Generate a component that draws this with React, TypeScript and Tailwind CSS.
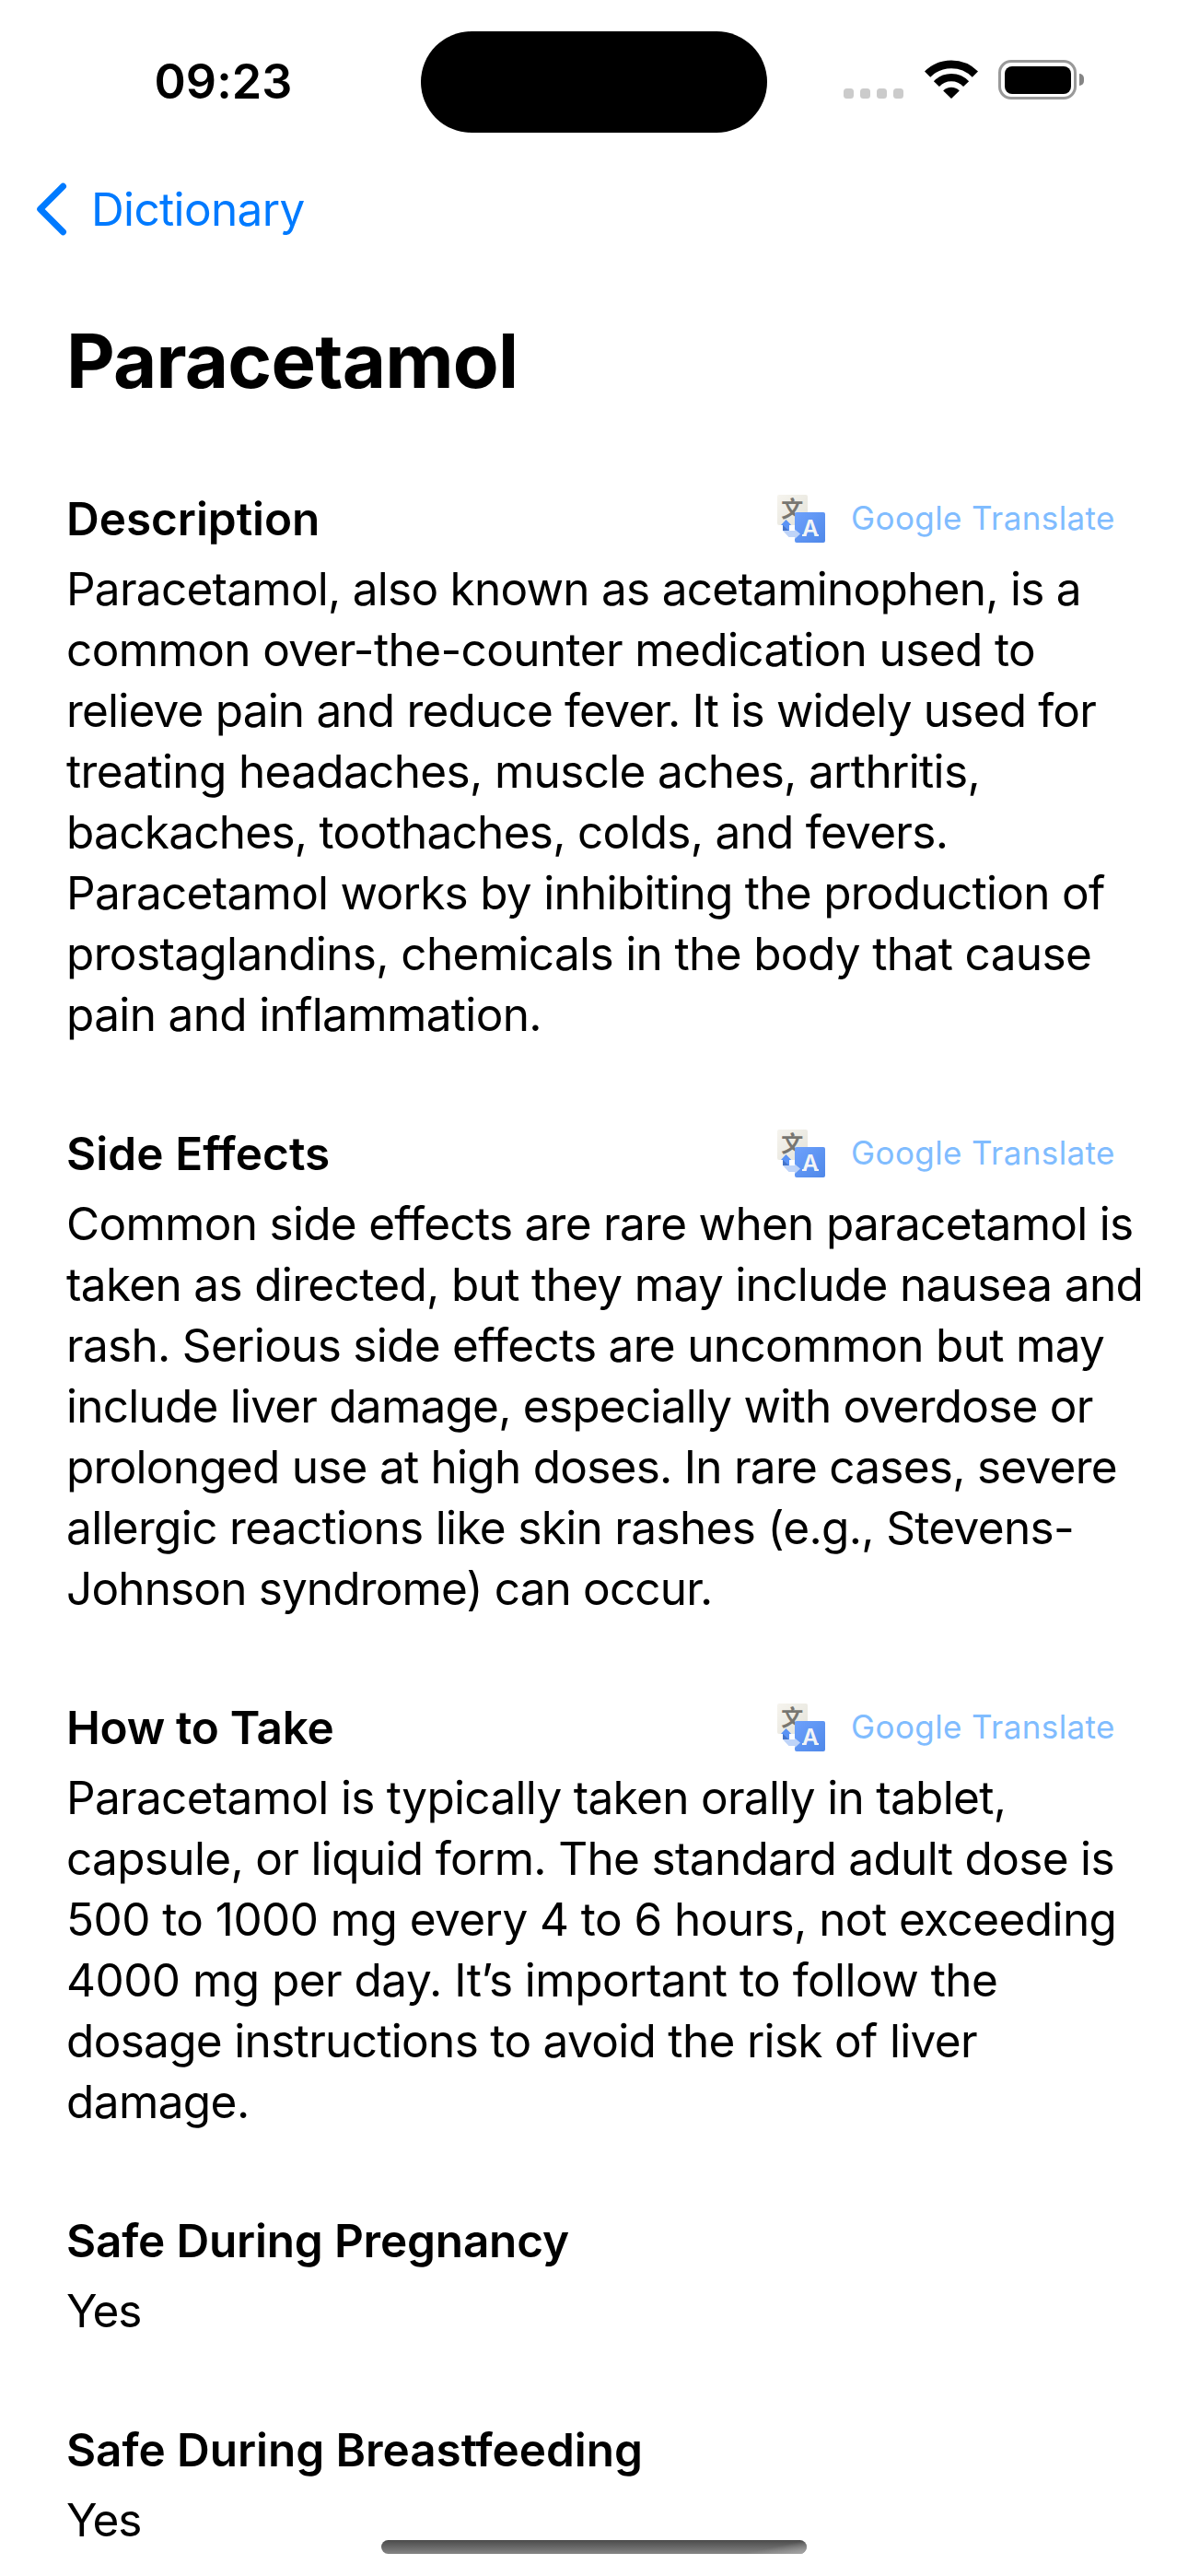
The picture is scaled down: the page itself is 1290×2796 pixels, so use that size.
type Line = { text: string; tracking: string };
type Entry = { title: string; titleTracking: string; translatable: boolean; lines: Line[] };

const entries: Entry[] = [
  {
    title: 'Description',
    titleTracking: 'tracking-[-0.05px]',
    translatable: true,
    lines: [
      { text: 'Paracetamol, also known as acetaminophen, is a', tracking: 'tracking-[-0.74px]' },
      { text: 'common over-the-counter medication used to', tracking: 'tracking-[-0.62px]' },
      { text: 'relieve pain and reduce fever. It is widely used for', tracking: 'tracking-[-0.81px]' },
      { text: 'treating headaches, muscle aches, arthritis,', tracking: 'tracking-[-0.66px]' },
      { text: 'backaches, toothaches, colds, and fevers.', tracking: 'tracking-[-0.725px]' },
      { text: 'Paracetamol works by inhibiting the production of', tracking: 'tracking-[-0.715px]' },
      { text: 'prostaglandins, chemicals in the body that cause', tracking: 'tracking-[-0.635px]' },
      { text: 'pain and inflammation.', tracking: 'tracking-[-0.65px]' },
    ],
  },
  {
    title: 'Side Effects',
    titleTracking: 'tracking-[0.08px]',
    translatable: true,
    lines: [
      { text: 'Common side effects are rare when paracetamol is', tracking: 'tracking-[-0.705px]' },
      { text: 'taken as directed, but they may include nausea and', tracking: 'tracking-[-0.66px]' },
      { text: 'rash. Serious side effects are uncommon but may', tracking: 'tracking-[-0.69px]' },
      { text: 'include liver damage, especially with overdose or', tracking: 'tracking-[-0.77px]' },
      { text: 'prolonged use at high doses. In rare cases, severe', tracking: 'tracking-[-0.745px]' },
      { text: 'allergic reactions like skin rashes (e.g., Stevens-', tracking: 'tracking-[-0.665px]' },
      { text: 'Johnson syndrome) can occur.', tracking: 'tracking-[-0.85px]' },
    ],
  },
  {
    title: 'How to Take',
    titleTracking: 'tracking-[-0.3px]',
    translatable: true,
    lines: [
      { text: 'Paracetamol is typically taken orally in tablet,', tracking: 'tracking-[-0.69px]' },
      { text: 'capsule, or liquid form. The standard adult dose is', tracking: 'tracking-[-0.665px]' },
      { text: '500 to 1000 mg every 4 to 6 hours, not exceeding', tracking: 'tracking-[-0.565px]' },
      { text: '4000 mg per day. It’s important to follow the', tracking: 'tracking-[-0.53px]' },
      { text: 'dosage instructions to avoid the risk of liver', tracking: 'tracking-[-0.68px]' },
      { text: 'damage.', tracking: 'tracking-[-0.6px]' },
    ],
  },
  {
    title: 'Safe During Pregnancy',
    titleTracking: 'tracking-[-0.2px]',
    translatable: false,
    lines: [{ text: 'Yes', tracking: 'tracking-[-1.2px]' }],
  },
  {
    title: 'Safe During Breastfeeding',
    titleTracking: 'tracking-[-0.07px]',
    translatable: false,
    lines: [{ text: 'Yes', tracking: 'tracking-[-1.2px]' }],
  },
];

function WifiIcon() {
  return (
    <svg className="ml-[33px] h-[42px] w-[58px]" viewBox="0 0 58 42" fill="none" stroke="#000">
      <path d="M3.1 15.6A36.6 36.6 0 0 1 54.9 15.6" strokeWidth="8.8" />
      <path d="M12.9 26.1A22 22 0 0 1 45.1 26.1" strokeWidth="8.3" />
      <path d="M29 42L20.2 33.4A12.6 12.6 0 0 1 37.8 33.4Z" fill="#000" stroke="none" />
    </svg>
  );
}

function StatusBar() {
  return (
    <header className="flex h-[177px] shrink-0 items-start">
      <div className="w-[457px] pt-[56px] pl-[167.5px] text-[52px] leading-[66px] font-semibold tracking-[0.05px] whitespace-nowrap">
        09:23
      </div>
      <div className="mt-[34px] h-[110px] w-[376px] rounded-full bg-black" />
      <div className="mt-[65px] ml-[83px] flex h-[43px] items-start">
        <div className="flex gap-[7px] pt-[31px]">
          {[0, 1, 2, 3].map((i) => (
            <span key={i} className="size-[11px] rounded-[3.5px] bg-[#cbcbcb]" />
          ))}
        </div>
        <div className="-ml-[10.5px]">
          <WifiIcon />
        </div>
        <div className="ml-[22.5px] h-[43px] w-[85px] rounded-[14px] border-[3.5px] border-[#999] p-[3.5px]">
          <div className="h-full w-full rounded-[8px] bg-black" />
        </div>
        <div className="mt-[15px] ml-[3px] h-[13px] w-[5px] rounded-r-full bg-[#858585]" />
      </div>
    </header>
  );
}

function TranslateIcon() {
  return (
    <svg className="h-[52px] w-[52px] overflow-visible" viewBox="0 0 52 52">
      <defs>
        <linearGradient id="paper" x1="0" y1="0" x2="1" y2="1">
          <stop offset="0" stopColor="#f6f4ee" />
          <stop offset="1" stopColor="#e4e3da" />
        </linearGradient>
        <linearGradient id="tile" x1="0" y1="0" x2="1" y2="1">
          <stop offset="0" stopColor="#6da1fc" />
          <stop offset="1" stopColor="#4f88e9" />
        </linearGradient>
      </defs>
      <rect width="33" height="33" rx="2" fill="url(#paper)" />
      <text x="16.3" y="23.6" fontSize="24" fontWeight="700" textAnchor="middle" fill="#777671" className="font-['Noto_Sans_CJK_SC',sans-serif]">
        文
      </text>
      <rect x="13" y="33" width="6.5" height="6" fill="#fff" />
      <path d="M9.5 27L15.2 33H13V39H6V33H4Z" fill="#5a93f5" />
      <path d="M6 33L12.5 39H6Z" fill="#4474c9" />
      <path d="M6 39H19V37.5L25 42.5L19 46H12.5Z" fill="#bfd4f8" />
      <rect x="19" y="19" width="33" height="33" rx="2" fill="url(#tile)" />
      <path d="M19 37.5L25 42.5L19 48Z" fill="#bfd4f8" />
      <text x="36" y="45" fontSize="24.5" fontWeight="600" textAnchor="middle" fill="#f4f5f6" className="font-['Inter',sans-serif]">
        A
      </text>
      <path d="M27 44H31.5M40.5 44H45" stroke="#f4f5f6" strokeWidth="2" />
    </svg>
  );
}

function Section({ entry }: { entry: Entry }) {
  return (
    <section>
      <div className="grid h-[66px] grid-cols-[772px_auto] items-center">
        <h2 className={`text-[49.5px] leading-[66px] font-semibold whitespace-nowrap ${entry.titleTracking}`}>
          {entry.title}
        </h2>
        {entry.translatable && (
          <button className="flex h-[66px] items-center gap-[28px] text-left">
            <TranslateIcon />
            <span className="pb-[2px] text-[35px] leading-[64px] tracking-[0.4px] whitespace-nowrap text-[#80bcff]">
              Google Translate
            </span>
          </button>
        )}
      </div>
      <p className="mt-[10px] text-[49.5px] leading-[66px]">
        {entry.lines.map((line) => (
          <span key={line.text} className={`block whitespace-nowrap ${line.tracking}`}>
            {line.text}
          </span>
        ))}
      </p>
    </section>
  );
}

export default function App() {
  return (
    <div className="relative flex h-[2796px] w-[1290px] flex-col overflow-hidden bg-white font-['Inter',sans-serif] text-black">
      <StatusBar />
      <nav className="flex h-[164px] shrink-0 items-start pt-[17px] pl-[38px] text-[#007aff]">
        <svg className="mt-[3px] h-[60px] w-[36px]" viewBox="0 0 36 60" fill="none" stroke="currentColor" strokeWidth="7" strokeLinecap="round" strokeLinejoin="round">
          <path d="M30.5 5.3L5.7 30L30.5 54.7" />
        </svg>
        <span className="ml-[25px] text-[49.5px] leading-[66px] tracking-[-0.65px]">Dictionary</span>
      </nav>
      <main className="pl-[72px]">
        <h1 className="text-[81.5px] leading-[102px] font-bold tracking-[-0.8px]">Paracetamol</h1>
        <div className="mt-[87px] flex flex-col gap-[85px]">
          {entries.map((entry) => (
            <Section key={entry.title} entry={entry} />
          ))}
        </div>
      </main>
      <div className="absolute top-[2757px] left-[414px] h-[15px] w-[462px] overflow-hidden rounded-full bg-linear-to-b from-[#4b4b4b] to-[#858585]">
        <div className="ml-auto h-full w-[70px] bg-linear-to-br from-transparent from-50% to-[#a8a8a8]" />
      </div>
    </div>
  );
}
